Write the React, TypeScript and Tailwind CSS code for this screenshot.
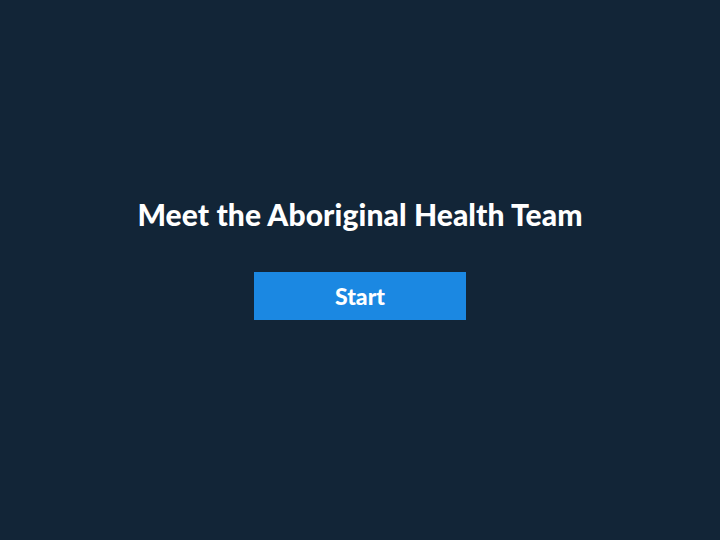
export default function App() {
  return (
    <div className="w-[720px] h-[540px] bg-[#122537] flex flex-col items-center pt-[196px] font-['Lato',sans-serif]">
      <h1 className="text-white font-black text-[30px] leading-[36px] tracking-[0.1px]">
        Meet the Aboriginal Health Team
      </h1>
      <button className="mt-[40px] w-[212px] h-[48px] bg-[#1b88e2] text-white font-black text-[23px]">
        Start
      </button>
    </div>
  );
}
